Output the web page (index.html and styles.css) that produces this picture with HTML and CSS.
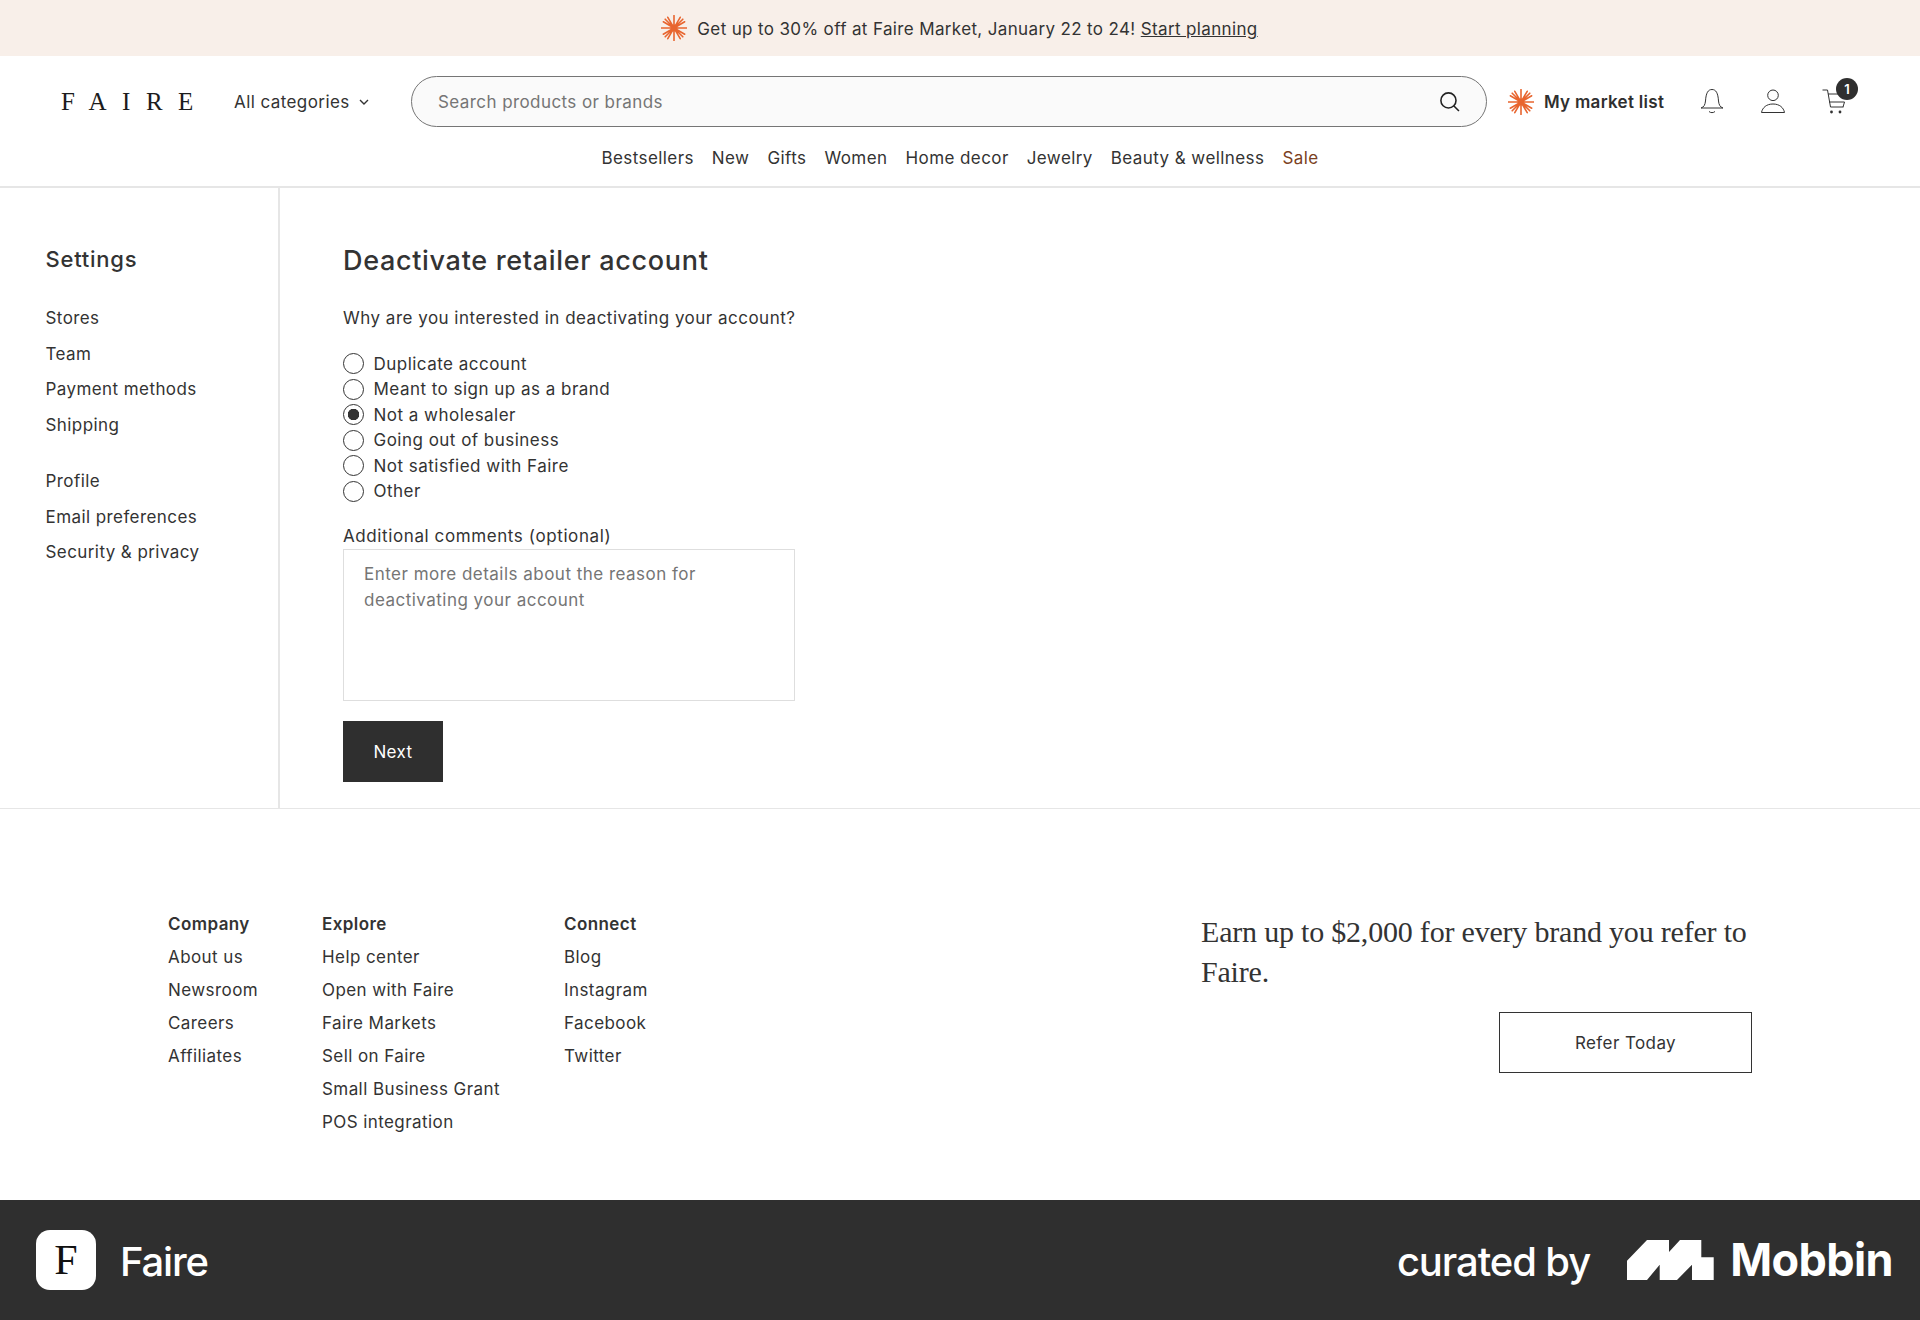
FILE: index.html
```html
<!DOCTYPE html>
<html lang="en">
<head>
<meta charset="utf-8">
<title>Faire - Deactivate retailer account</title>
<link rel="stylesheet" href="styles.css">
</head>
<body>
<svg class="defs" width="0" height="0" aria-hidden="true"><defs>
<symbol id="burst" viewBox="0 0 26 26"><g stroke="#e8652f" stroke-width="1.600" stroke-linecap="round"><path d="M13 .5v25M.5 13h25M4.200 4.200l17.600 17.600M21.800 4.200L4.200 21.800M6.800 2.300l12.400 21.400M19.200 2.300L6.800 23.700M2.300 6.800l21.400 12.400M23.700 6.800L2.300 19.200"/></g><circle cx="13" cy="13" r="3.500" fill="#e8652f"/></symbol>
</defs></svg>
<div class="banner"><svg class="burst"><use href="#burst"/></svg><span class="banner-text">Get up to 30% off at Faire Market, January 22 to 24! <a class="banner-link">Start planning</a></span></div>
<header class="header">
  <div class="header-top">
    <div class="logo">FAIRE</div>
    <div class="cats">All categories <svg class="chev" viewBox="0 0 10 6"><path d="M1 1l4 4 4-4" fill="none" stroke="#333" stroke-width="1.400"/></svg></div>
    <div class="search"><span>Search products or brands</span>
      <svg class="search-ic" viewBox="0 0 20 20"><circle cx="9" cy="9" r="7.200" fill="none" stroke="#222" stroke-width="1.500"/><path d="M14 14l5 5" stroke="#222" stroke-width="1.500"/></svg></div>
    <div class="market"><svg class="burst"><use href="#burst"/></svg><span>My market list</span></div>
    <svg class="ic" viewBox="0 0 24 26"><path d="M1 19c3-1 4-3 4.500-7C6 4 8 .5 12 .5S18 4 18.500 12c.5 4 1.500 6 4.500 7z" fill="none" stroke="#333"/><path d="M9 22.500c1.500 1.500 4.500 1.500 6 0" fill="none" stroke="#333"/></svg>
    <svg class="ic gap" viewBox="0 0 24 26"><circle cx="12" cy="6.300" r="5.300" fill="none" stroke="#333"/><path d="M.5 23.500c1-5 5-8.500 11.500-8.500s10.500 3.500 11.500 8.500z" fill="none" stroke="#333"/></svg>
    <div class="cart gap"><svg class="ic" viewBox="0 0 24 26"><path d="M.5 1h5l3 17h13M6 5h10M7 13h15.500l-1.500 5" fill="none" stroke="#333"/><circle cx="9.500" cy="23" r="1.400" fill="#333"/><circle cx="18" cy="23" r="1.400" fill="#333"/></svg><span class="badge">1</span></div>
  </div>
  <nav class="nav"><a>Bestsellers</a><a>New</a><a>Gifts</a><a>Women</a><a>Home decor</a><a>Jewelry</a><a>Beauty &amp; wellness</a><a class="sale">Sale</a></nav>
</header>
<main class="main">
  <aside class="side">
    <h2 class="side-title">Settings</h2>
    <ul class="side-list"><li>Stores</li><li>Team</li><li>Payment methods</li><li>Shipping</li></ul>
    <ul class="side-list"><li>Profile</li><li>Email preferences</li><li>Security &amp; privacy</li></ul>
  </aside>
  <section class="content">
    <h1 class="title">Deactivate retailer account</h1>
    <p class="question">Why are you interested in deactivating your account?</p>
    <div class="radios">
      <div class="radio"><i></i>Duplicate account</div>
      <div class="radio"><i></i>Meant to sign up as a brand</div>
      <div class="radio on"><i></i>Not a wholesaler</div>
      <div class="radio"><i></i>Going out of business</div>
      <div class="radio"><i></i>Not satisfied with Faire</div>
      <div class="radio"><i></i>Other</div>
    </div>
    <div class="label">Additional comments (optional)</div>
    <div class="textarea">Enter more details about the reason for deactivating your account</div>
    <div class="next">Next</div>
  </section>
</main>
<footer class="footer">
  <div class="cols">
    <ul class="col c1"><li class="h">Company</li><li>About us</li><li>Newsroom</li><li>Careers</li><li>Affiliates</li></ul>
    <ul class="col c2"><li class="h">Explore</li><li>Help center</li><li>Open with Faire</li><li>Faire Markets</li><li>Sell on Faire</li><li>Small Business Grant</li><li>POS integration</li></ul>
    <ul class="col"><li class="h">Connect</li><li>Blog</li><li>Instagram</li><li>Facebook</li><li>Twitter</li></ul>
  </div>
  <div class="refer">
    <p class="refer-text">Earn up to $2,000 for every brand you refer to Faire.</p>
    <div class="refer-btn">Refer Today</div>
  </div>
</footer>
<div class="mobbin">
  <div class="app"><div class="app-icon">F</div><span class="app-name">Faire</span></div>
  <div class="curated"><span class="cur-text">curated by</span>
    <svg class="m-logo" viewBox="0 0 87 40"><path d="M0 20.700L20 0h22v12L53 0h21.300v17.300h12.400V40H65V24.700L50 40H32.700V24.700L20 40H0z" fill="#fff"/></svg>
    <span class="m-name">Mobbin</span></div>
</div>
</body>
</html>
```
FILE: styles.css
```css
* { box-sizing: border-box; }
body { margin: 0; font-family: Inter, "Noto Sans", sans-serif; font-size: 17px; letter-spacing: 0.42px; color: #333; background: #fff; }
ul { list-style: none; margin: 0; padding: 0; }
h1, h2, p { margin: 0; }
.defs { position: absolute; }
.banner { height: 56px; background: #f8efe9; display: flex; align-items: center; justify-content: center; gap: 10px; letter-spacing: 0.36px; padding-right: 1px; }
.banner-text { padding-top: 2px; }
.banner-link { text-decoration: underline; }
.burst { width: 26px; height: 26px; flex: none; display: block; }
.header { height: 132px; padding-top: 20px; border-bottom: 2px solid #e6e6e6; }
.header-top { display: flex; align-items: center; height: 51px; padding-left: 61px; }
.logo { font-family: "Liberation Serif", serif; font-size: 25px; letter-spacing: 15.500px; width: 173px; color: #1c1c1c; }
.cats { display: flex; align-items: center; gap: 9px; width: 177px; }
.chev { width: 10px; height: 6px; }
.search { width: 1076px; height: 51px; border: 1.500px solid #757575; border-radius: 26px; background: #fafafa; display: flex; align-items: center; justify-content: space-between; padding: 0 26px; color: #757575; }
.search-ic { width: 21px; height: 21px; }
.market { display: flex; align-items: center; gap: 10px; margin-left: 21px; width: 192px; font-weight: 600; letter-spacing: 0.3px; color: #2f2f2f; }
.ic { width: 24px; height: 26px; display: block; }
.gap { margin-left: 37px; }
.cart { position: relative; }
.badge { position: absolute; top: -11px; left: 14px; width: 22px; height: 22px; border-radius: 50%; background: #2f2f2f; color: #fff; font-size: 13px; font-weight: 600; letter-spacing: 0; display: flex; align-items: center; justify-content: center; }
.nav { display: flex; justify-content: center; gap: 18px; margin-top: 21px; line-height: 20px; }
.sale { color: #7b3f22; }
.main { display: flex; height: 621px; border-bottom: 1px solid #e6e6e6; }
.side { width: 280px; border-right: 2px solid #e6e6e6; padding: 57px 0 0 45.500px; flex: none; }
.side-title { font-size: 22px; font-weight: 500; letter-spacing: 0.75px; line-height: 28px; margin-bottom: 28px; }
.side-list { margin-bottom: 21px; }
.side-list li { line-height: 35.500px; }
.content { padding: 56px 0 0 63px; }
.title { font-size: 27px; font-weight: 500; letter-spacing: 0.68px; line-height: 34px; }
.question { margin-top: 27px; line-height: 26px; letter-spacing: 0.49px; }
.radios { margin-top: 20px; letter-spacing: 0.48px; }
.radio { display: flex; align-items: center; gap: 9.500px; height: 25.500px; }
.radio i { width: 21px; height: 21px; border: 1.500px solid #333; border-radius: 50%; display: block; }
.on i { background: radial-gradient(circle, #333 0 5.500px, transparent 6px); }
.label { margin-top: 20px; line-height: 25px; letter-spacing: 0.6px; }
.textarea { width: 452px; height: 152px; border: 1.500px solid #dedede; padding: 11px 20px; line-height: 26px; letter-spacing: 0.48px; color: #757575; }
.next { width: 100px; height: 61px; margin-top: 20px; background: #2f2f2f; color: #fff; display: flex; align-items: center; justify-content: center; }
.footer { height: 391px; display: flex; justify-content: space-between; padding: 99px 168px 0; }
.cols { display: flex; }
.col li { line-height: 33px; }
.col .h { font-weight: 600; }
.c1 { width: 154px; }
.c2 { width: 242px; }
.refer { width: 551px; }
.refer-text { font-family: "Liberation Serif", serif; font-size: 30px; letter-spacing: -0.2px; line-height: 40px; padding-top: 4px; }
.refer-btn { width: 253px; height: 61px; border: 1.500px solid #333; margin: 20px 0 0 auto; display: flex; align-items: center; justify-content: center; }
.mobbin { height: 120px; background: #2f2f2f; color: #fff; display: flex; align-items: center; justify-content: space-between; padding: 0 27px 0 36px; }
.app { display: flex; align-items: center; gap: 24px; font-size: 40px; font-weight: 500; letter-spacing: -1.200px; }
.app-name { padding-top: 2px; }
.app-icon { width: 60px; height: 60px; border-radius: 14px; background: #fff; color: #111; font-family: "Liberation Serif", serif; font-size: 42px; font-weight: 400; letter-spacing: 0; display: flex; align-items: center; justify-content: center; }
.curated { display: flex; align-items: center; font-size: 40px; font-weight: 500; letter-spacing: -1.100px; }
.cur-text { padding-top: 2px; }
.m-logo { width: 87px; height: 40px; margin: 0 16px 0 37px; }
.m-name { font-size: 45px; font-weight: 700; letter-spacing: -0.600px; padding-bottom: 2px; }
```
